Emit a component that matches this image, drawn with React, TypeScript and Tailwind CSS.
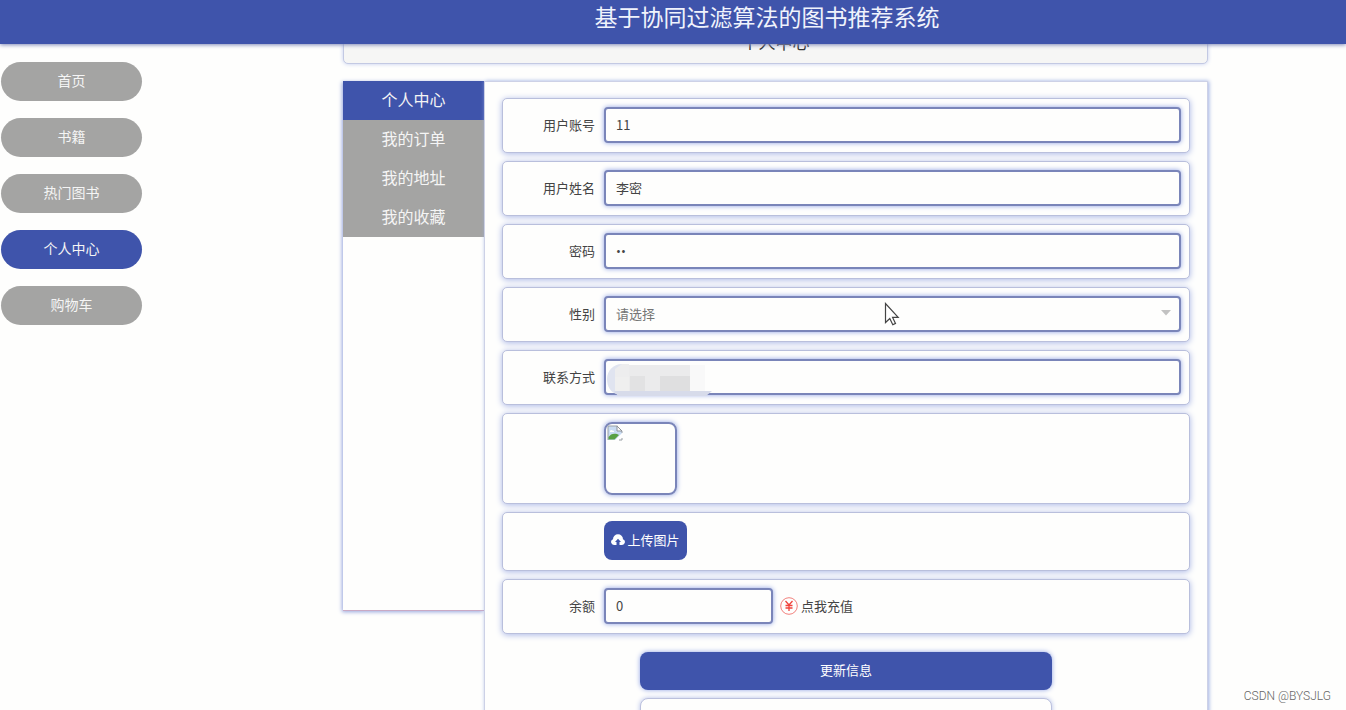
import React, { useState } from 'react';

interface FormRowProps {
  label?: string;
  htmlFor?: string;
  className?: string;
  children: React.ReactNode;
}

const navItems = ['首页', '书籍', '热门图书', '个人中心', '购物车'];
const menuItems = ['个人中心', '我的订单', '我的地址', '我的收藏'];

const fieldClass =
  'h-9 w-full rounded-[4px] border-2 border-[#7a85b9] bg-[#fefefd] px-2.5 text-[13px] text-[#444] shadow-[0_0_5px_#8fa2e4] outline-none';

// One bordered line of the form, label on the left
const FormRow: React.FC<FormRowProps> = ({ label, htmlFor, className = 'h-[55px] pb-0.5', children }) => (
  <div
    className={`flex items-center rounded-[5px] border border-[#b9bfdc] bg-[#fefefd] pr-2 shadow-[0_1px_6px_#a9b6e6] ${className}`}
  >
    <label htmlFor={htmlFor} className="w-[92px] shrink-0 text-right text-[13px] leading-5 text-[#444]">
      {label}
    </label>
    <div className="ml-[9px] flex min-w-0 flex-1 items-center">{children}</div>
  </div>
);

const BrokenImage: React.FC = () => (
  <svg width="16" height="16" viewBox="0 0 16 16" aria-hidden="true">
    <path d="M1 1h9l5 5v3l-6 6H1z" fill="#c9dcf3" />
    <path d="M1 15V1h9.500M15 6v2M15 13v2h-3" fill="none" stroke="#9aa0a6" strokeWidth="1" />
    <path d="M10 1v5h5z" fill="#f8f8f8" stroke="#8d9299" strokeWidth="1" />
    <path d="M3 6.500c0-1.500 1.500-2 2.200-1 1.300-.4 2 .5 1.800 1.500H3z" fill="#fff" />
    <path d="M1.500 14.500V12c2-3 5-4 8.500-3l2 1-4.500 4.500z" fill="#58a044" />
    <path d="M8.500 16 15.500 9" stroke="#fff" strokeWidth="2" />
  </svg>
);

const CloudUpload: React.FC = () => (
  <svg width="14" height="12" viewBox="0 0 14 12" aria-hidden="true">
    <path
      d="M3.200 11A3 3 0 0 1 2 5.200 5 5 0 0 1 12 5.200 3 3 0 0 1 10.800 11H8.500V8h1.500L7 4.800 4 8h1.500V11z"
      fill="#fff"
    />
  </svg>
);

const YenCircle: React.FC = () => (
  <svg width="18" height="18" viewBox="0 0 18 18" fill="none" aria-hidden="true">
    <circle cx="9" cy="9" r="8.300" stroke="#f2807c" strokeWidth="1" />
    <path d="M5.500 4 9 8l3.500-4M9 8v6M5.500 8.500h7M5.500 11h7" stroke="#f0433c" strokeWidth="1.300" />
  </svg>
);

// Blurred-out phone number
const Mosaic: React.FC = () => (
  <svg className="absolute top-1 left-0.5" width="106" height="34" viewBox="0 0 106 34" aria-hidden="true">
    <path d="M16 1C7 1 1 8 1 16s4 13 9 15h12V1z" fill="#e0e4f0" />
    <path d="M16 1h7v27H9V6z" fill="#ededee" />
    <path d="M23 2h61v26H23z" fill="#ebebec" />
    <path d="M9 14h14v14H9z" fill="#efefef" />
    <path d="M24 13h15v15H24z" fill="#e2e2e3" />
    <path d="M54 13h30v15H54z" fill="#dfdfe0" />
    <path d="M84 2h15v26H84z" fill="#f9f9f9" />
    <path d="M8 28h98l-6 5H12z" fill="#d7dbea" />
  </svg>
);

const App: React.FC = () => {
  const [activeNav, setActiveNav] = useState('个人中心');
  const [activeMenu, setActiveMenu] = useState('个人中心');
  const [form, setForm] = useState({ account: '11', name: '李密', password: '11', gender: '', phone: '', balance: '0' });

  const handleChange = (e: React.ChangeEvent<HTMLInputElement | HTMLSelectElement>) => {
    setForm({ ...form, [e.target.name]: e.target.value });
  };

  return (
    <div className="relative h-screen overflow-hidden bg-[#fefefd] font-['Noto_Sans_CJK_SC',sans-serif]">
      <header className="relative z-10 flex h-11 items-center justify-center bg-[#3f54ab] pb-3 pl-[188px] shadow-[0_1px_4px_#8089b8]">
        <h1 className="text-[23px] leading-6 text-[#f0f3fc]">基于协同过滤算法的图书推荐系统</h1>
      </header>

      <div className="flex items-start">
        {/* Main navigation */}
        <nav className="mt-[18px] ml-px flex w-[141px] shrink-0 flex-col gap-[17px]">
          {navItems.map((item) => (
            <button
              key={item}
              onClick={() => setActiveNav(item)}
              className={`h-[39px] rounded-[20px] pb-1 text-sm text-[#f5f5f5] ${
                item === activeNav ? 'bg-[#3f54ab]' : 'bg-[#a4a4a3]'
              }`}
            >
              {item}
            </button>
          ))}
        </nav>

        <main className="min-w-0 flex-1 pr-[138px] pl-[201px]">
          {/* Page title, scrolled partly under the header */}
          <div className="-mt-[26px] flex h-[46px] items-center justify-center rounded-[5px] border border-[#c3c9e3] bg-[#f6f6f5] text-[17px] leading-[17px] text-[#333] shadow-[0_0_4px_#c3ccee]">
            个人中心
          </div>

          <div className="mt-[17px] flex items-start">
            <aside className="flex h-[530px] w-[141px] shrink-0 flex-col border-b border-[#c9a9c4] shadow-[-1px_1px_4px_#96a4dd]">
              {menuItems.map((item) => (
                <button
                  key={item}
                  onClick={() => setActiveMenu(item)}
                  className={`h-[39px] pb-1 text-base text-[#f5f5f5] ${
                    item === activeMenu ? 'bg-[#3f54ab]' : 'bg-[#a4a4a3]'
                  }`}
                >
                  {item}
                </button>
              ))}
            </aside>

            <section className="min-w-0 flex-1 border border-[#cdd1e6] bg-[#fefefd] px-[17px] py-4 shadow-[1px_0_4px_#9caee2]">
              <form className="flex flex-col gap-2" onSubmit={(e) => e.preventDefault()}>
                <FormRow label="用户账号" htmlFor="account">
                  <input id="account" name="account" className={fieldClass} value={form.account} onChange={handleChange} />
                </FormRow>
                <FormRow label="用户姓名" htmlFor="name">
                  <input id="name" name="name" className={fieldClass} value={form.name} onChange={handleChange} />
                </FormRow>
                <FormRow label="密码" htmlFor="password">
                  <input
                    id="password"
                    name="password"
                    type="password"
                    className={`font-['Open_Sans',sans-serif] ${fieldClass}`}
                    value={form.password}
                    onChange={handleChange}
                  />
                </FormRow>
                <FormRow label="性别" htmlFor="gender">
                  <div className="relative w-full">
                    <select
                      id="gender"
                      name="gender"
                      className={`appearance-none text-[#757575] ${fieldClass}`}
                      value={form.gender}
                      onChange={handleChange}
                    >
                      <option value="">请选择</option>
                      <option value="男">男</option>
                      <option value="女">女</option>
                    </select>
                    <svg className="pointer-events-none absolute top-[14px] right-2.5" width="10" height="6" viewBox="0 0 10 6" aria-hidden="true">
                      <path d="M0 0h10L5 5.500z" fill="#c2c2c2" />
                    </svg>
                    {/* Mouse pointer */}
                    <svg className="pointer-events-none absolute top-1.5 left-[280px]" width="16" height="24" viewBox="0 0 16 24" aria-hidden="true">
                      <path
                        d="M1.500 1.500v19l4.300-4 3 6.200 2.700-1.300-2.900-6h5.600z"
                        fill="#fff"
                        stroke="#444"
                        strokeWidth="1.200"
                      />
                    </svg>
                  </div>
                </FormRow>
                <FormRow label="联系方式" htmlFor="phone">
                  <div className="relative w-full">
                    <input id="phone" name="phone" className={fieldClass} value={form.phone} onChange={handleChange} />
                    <Mosaic />
                  </div>
                </FormRow>

                <FormRow className="h-[91px]">
                  <div className="h-[73px] w-[73px] rounded-lg border-2 border-[#7a85b9] p-px shadow-[0_0_5px_#8fa2e4]">
                    <BrokenImage />
                  </div>
                </FormRow>
                <FormRow className="h-[59px] pb-0.5">
                  <button
                    type="button"
                    className="flex h-[39px] w-[83px] items-center justify-center gap-0.5 rounded-lg bg-[#3f54ab] pb-0.5 text-[13px] whitespace-nowrap text-white"
                  >
                    <CloudUpload />
                    上传图片
                  </button>
                </FormRow>
                <FormRow label="余额" htmlFor="balance">
                  <div className="w-[169px]">
                    <input id="balance" name="balance" className={fieldClass} value={form.balance} onChange={handleChange} />
                  </div>
                  <button type="button" className="ml-[7px] flex items-center gap-[3px] text-[13px] text-[#444]">
                    <YenCircle />
                    点我充值
                  </button>
                </FormRow>

                <button
                  type="submit"
                  className="mt-2.5 h-[38px] w-3/5 self-center rounded-lg bg-[#3f54ab] pb-0.5 text-[13px] text-white shadow-[0_0_5px_#8fa2e4]"
                >
                  更新信息
                </button>
                <button
                  type="button"
                  aria-label="退出登录"
                  className="h-[38px] w-3/5 self-center rounded-lg border border-[#bcc1dd] bg-[#fefefd] shadow-[0_0_5px_#b4bfe8]"
                />
              </form>
            </section>
          </div>
        </main>
      </div>

      <p className="absolute right-[15px] bottom-1.5 font-['Roboto',sans-serif] text-xs font-light text-[#666]">CSDN @BYSJLG</p>
    </div>
  );
};

export default App;
